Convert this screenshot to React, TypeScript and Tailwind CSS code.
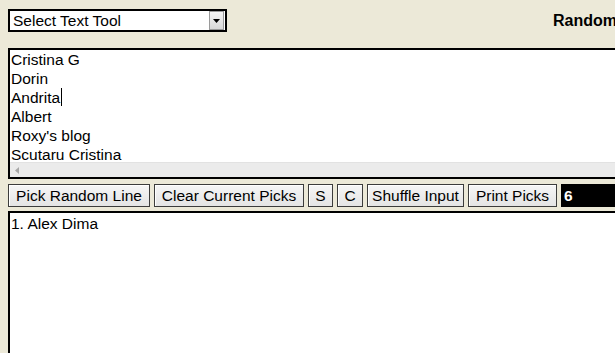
import React from "react";

const names = ["Cristina G", "Dorin", "Andrita", "Albert", "Roxy's blog", "Scutaru Cristina"];

function Btn({ children, w }: { children: React.ReactNode; w: string }) {
  return (
    <button
      className={`h-[23px] ${w} shrink-0 border border-[#3c3c3c] bg-gradient-to-b from-[#f6f6f6] to-[#e4e4e4] text-[15.5px] leading-none text-black shadow-[inset_1px_1px_0_#fff]`}
    >
      {children}
    </button>
  );
}

export default function App() {
  return (
    <div className="relative h-[353px] w-[615px] overflow-hidden bg-[#ECE9D8] font-['Liberation_Sans',Arial,sans-serif] text-black">
      <div className="w-[760px] pl-[8px] pt-[9px]">
        {/* top row */}
        <div className="flex h-[23px] items-center">
          <div className="flex h-[23px] w-[219px] items-center border-2 border-black bg-white">
            <span className="flex-1 pl-[3px] text-[15.5px] leading-none">Select Text Tool</span>
            <div className="mr-[1px] flex h-[19px] w-[15px] items-center justify-center border border-[#9a9a9a] bg-gradient-to-b from-[#f4f4f4] to-[#d8d8d8]">
              <svg width="7" height="4" viewBox="0 0 7 4">
                <path d="M0 0h7L3.5 4z" fill="#000" />
              </svg>
            </div>
          </div>
          <span className="ml-[326px] whitespace-nowrap text-[16px] font-bold leading-none">Random Line Picker</span>
        </div>

        {/* input textarea */}
        <div className="mt-[16px] flex h-[131px] flex-col border-2 border-black bg-white">
          <div className="flex-1 overflow-hidden pl-[1px] text-[15.5px] leading-[19px]">
            {names.map((n) => (
              <div key={n} className="h-[19px] whitespace-nowrap">
                {n === "Andrita" ? (
                  <span className="relative">
                    {n}
                    <span className="absolute right-[-2px] top-[-1px] h-[18px] w-px bg-black" />
                  </span>
                ) : (
                  n
                )}
              </div>
            ))}
          </div>
          <div className="flex h-[15px] items-center border-t border-[#e2e2e2] bg-[#ebebeb] pl-[5px]">
            <svg width="4" height="7" viewBox="0 0 4 7">
              <path d="M4 0v7L0 3.5z" fill="#a8a8a8" />
            </svg>
          </div>
        </div>

        {/* buttons */}
        <div className="mt-[5px] flex items-center gap-[4px]">
          <Btn w="w-[142px]">Pick Random Line</Btn>
          <Btn w="w-[150px]">Clear Current Picks</Btn>
          <Btn w="w-[25px]">S</Btn>
          <Btn w="w-[26px]">C</Btn>
          <Btn w="w-[97px]">Shuffle Input</Btn>
          <Btn w="w-[89px]">Print Picks</Btn>
          <div className="flex h-[23px] w-[120px] items-center bg-black pl-[3px] text-[15.5px] font-bold leading-none text-white">6</div>
        </div>

        {/* output */}
        <div className="mt-[4px] h-[200px] border-2 border-black bg-white pl-[1px] pt-[1px] text-[15.5px] leading-[19px]">
          1. Alex Dima
        </div>
      </div>
    </div>
  );
}
